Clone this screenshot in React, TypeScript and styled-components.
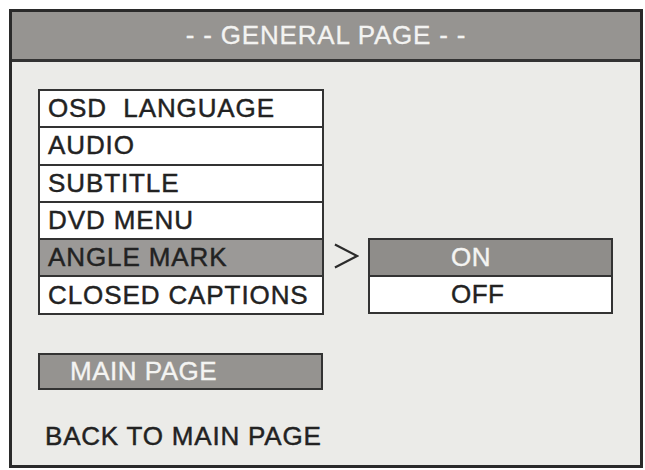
import React from "react";
import styled, { createGlobalStyle } from "styled-components";

const GlobalStyle = createGlobalStyle`
  html, body {
    margin: 0;
    padding: 0;
    background: #ffffff;
  }
  body {
    font-family: "Liberation Sans", Arial, sans-serif;
  }
`;

const items = [
  "OSD  LANGUAGE",
  "AUDIO",
  "SUBTITLE",
  "DVD MENU",
  "ANGLE MARK",
  "CLOSED CAPTIONS",
];
const activeItem = "ANGLE MARK";

export default function App() {
  return (
    <>
      <GlobalStyle />
      <Frame>
        <Header>- - GENERAL PAGE - -</Header>
        <Body>
          <MenuRow>
            <List>
              {items.map((label) => (
                <Item key={label} active={label === activeItem}>
                  {label}
                </Item>
              ))}
            </List>
            <Side>
              <Arrow>
                <svg width="27" height="30" viewBox="0 0 27 30">
                  <polyline
                    points="2,3 25,15 2,27"
                    fill="none"
                    stroke="#2b2b2b"
                    strokeWidth="2.2"
                  />
                </svg>
              </Arrow>
              <Options>
                <Option active>ON</Option>
                <Option>OFF</Option>
              </Options>
            </Side>
          </MenuRow>
          <MainPage>MAIN PAGE</MainPage>
          <BackText>BACK TO MAIN PAGE</BackText>
        </Body>
      </Frame>
    </>
  );
}

interface ActiveProps {
  active?: boolean;
}

const Frame = styled.div`
  box-sizing: border-box;
  margin: 9px 0 0 9px;
  width: 634px;
  height: 459px;
  border: 3px solid #2a2a2a;
  background: #ebebe8;
  display: flex;
  flex-direction: column;
`;
const Header = styled.div`
  height: 47px;
  border-bottom: 3px solid #333;
  background: #969491;
  color: #f3f3f1;
  font-size: 26px;
  letter-spacing: 0.8px;
  -webkit-text-stroke: 0.3px #f3f3f1;
  display: flex;
  align-items: center;
  justify-content: center;
`;
const Body = styled.div`
  display: flex;
  flex-direction: column;
  align-items: flex-start;
  padding: 27px 0 0 26px;
`;
const MenuRow = styled.div`
  display: flex;
  align-items: flex-end;
`;
const List = styled.div`
  width: 286px;
  box-sizing: border-box;
  border: 2px solid #333;
  background: #fff;
`;
const Item = styled.div<ActiveProps>`
  height: 35.3px;
  padding-left: 8px;
  display: flex;
  align-items: center;
  font-size: 26px;
  letter-spacing: 0.9px;
  white-space: pre;
  color: #222;
  -webkit-text-stroke: 0.45px #222;
  background: ${(p) => (p.active ? "#9b9997" : "#fff")};
  & + & {
    border-top: 2px solid #333;
  }
`;
const Side = styled.div`
  display: flex;
  align-items: flex-start;
  margin-left: 9px;
  margin-bottom: 1px;
`;
const Arrow = styled.div`
  width: 26px;
  height: 37px;
  display: flex;
  align-items: center;
  margin-right: 9px;
`;
const Options = styled.div`
  width: 245px;
  box-sizing: border-box;
  border: 2px solid #333;
  background: #fff;
`;
const Option = styled.div<ActiveProps>`
  height: 35px;
  display: flex;
  align-items: center;
  padding-left: 81px;
  font-size: 26px;
  letter-spacing: 0.5px;
  color: ${(p) => (p.active ? "#f4f4f2" : "#222")};
  -webkit-text-stroke: 0.4px ${(p) => (p.active ? "#f4f4f2" : "#222")};
  background: ${(p) => (p.active ? "#8f8d8a" : "#fff")};
  & + & {
    border-top: 2px solid #333;
  }
`;
const MainPage = styled.div`
  margin-top: 38px;
  width: 285px;
  height: 37px;
  box-sizing: border-box;
  border: 2px solid #333;
  background: #959390;
  color: #f4f4f2;
  -webkit-text-stroke: 0.35px #f4f4f2;
  font-size: 26px;
  letter-spacing: 0.5px;
  padding-left: 30px;
  display: flex;
  align-items: center;
`;
const BackText = styled.div`
  margin-top: 31px;
  padding-left: 7px;
  font-size: 26px;
  line-height: 30px;
  letter-spacing: 0.8px;
  color: #222;
  -webkit-text-stroke: 0.45px #222;
`;
